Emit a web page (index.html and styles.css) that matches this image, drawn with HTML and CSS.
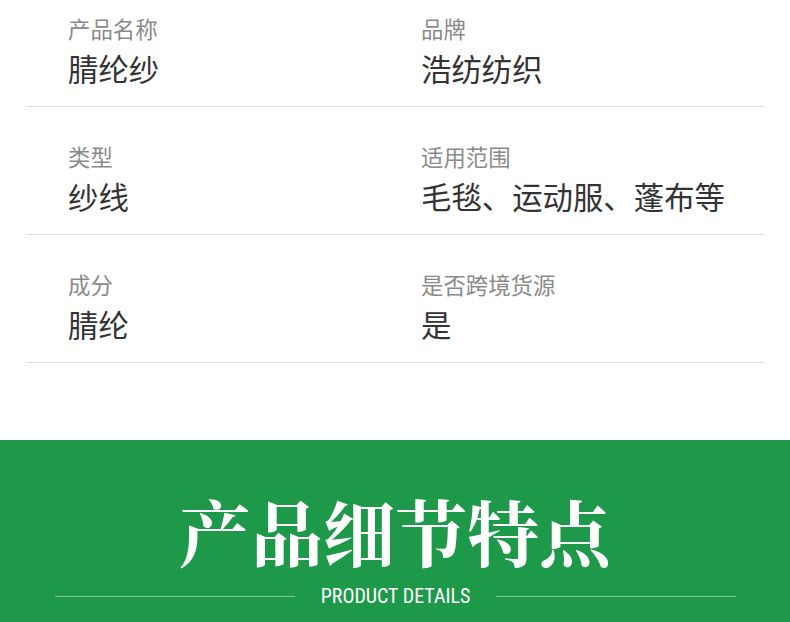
FILE: index.html
```html
<!DOCTYPE html>
<html lang="zh-CN">
<head>
<meta charset="utf-8">
<title>产品参数</title>
<link rel="stylesheet" href="styles.css">
</head>
<body>
<section class="specs">
  <div class="row">
    <div class="cell"><div class="label">产品名称</div><div class="value">腈纶纱</div></div>
    <div class="cell"><div class="label">品牌</div><div class="value">浩纺纺织</div></div>
  </div>
  <div class="row">
    <div class="cell"><div class="label">类型</div><div class="value">纱线</div></div>
    <div class="cell"><div class="label">适用范围</div><div class="value">毛毯、运动服、蓬布等</div></div>
  </div>
  <div class="row">
    <div class="cell"><div class="label">成分</div><div class="value">腈纶</div></div>
    <div class="cell"><div class="label">是否跨境货源</div><div class="value">是</div></div>
  </div>
</section>
<section class="details">
  <h2 class="title">产品细节特点</h2>
  <div class="sub">
    <span class="line"></span>
    <span class="sub-text">PRODUCT DETAILS</span>
    <span class="line"></span>
  </div>
</section>
</body>
</html>
```
FILE: styles.css
```css
html, body {
  margin: 0;
  padding: 0;
  background: #fff;
  overflow: hidden;
}
body {
  font-family: "Noto Sans CJK SC", "Noto Sans", sans-serif;
  height: 622px;
}
.specs {
  margin: -21px 26px 0;
}
.row {
  display: grid;
  grid-template-columns: 353px 1fr;
  padding: 38px 0 22px 42px;
  border-bottom: 1px solid #dcdcdc;
}
.label {
  font-size: 22.4px;
  line-height: 22px;
  color: #8a8a8a;
}
.value {
  margin-top: 14px;
  font-size: 30.4px;
  line-height: 31px;
  color: #333;
}
.details {
  margin-top: 77px;
  background: #1e994a;
  height: 300px;
  padding-top: 54px;
  box-sizing: border-box;
}
.title {
  margin: 0;
  text-align: center;
  font-family: "Noto Serif CJK SC", "Source Han Serif SC", "Noto Sans CJK SC", serif;
  font-weight: 700;
  font-size: 72px;
  line-height: 72px;
  color: #fff;
}
.sub {
  display: flex;
  align-items: center;
  margin: 18px 54px 0 55px;
  gap: 26px;
}
.line {
  flex: 1;
  height: 1px;
  background: rgba(255, 255, 255, 0.45);
}
.sub-text {
  font-family: "Roboto Condensed", Roboto, sans-serif;
  font-weight: 400;
  font-size: 20px;
  line-height: 24px;
  color: #fff;
}
```
